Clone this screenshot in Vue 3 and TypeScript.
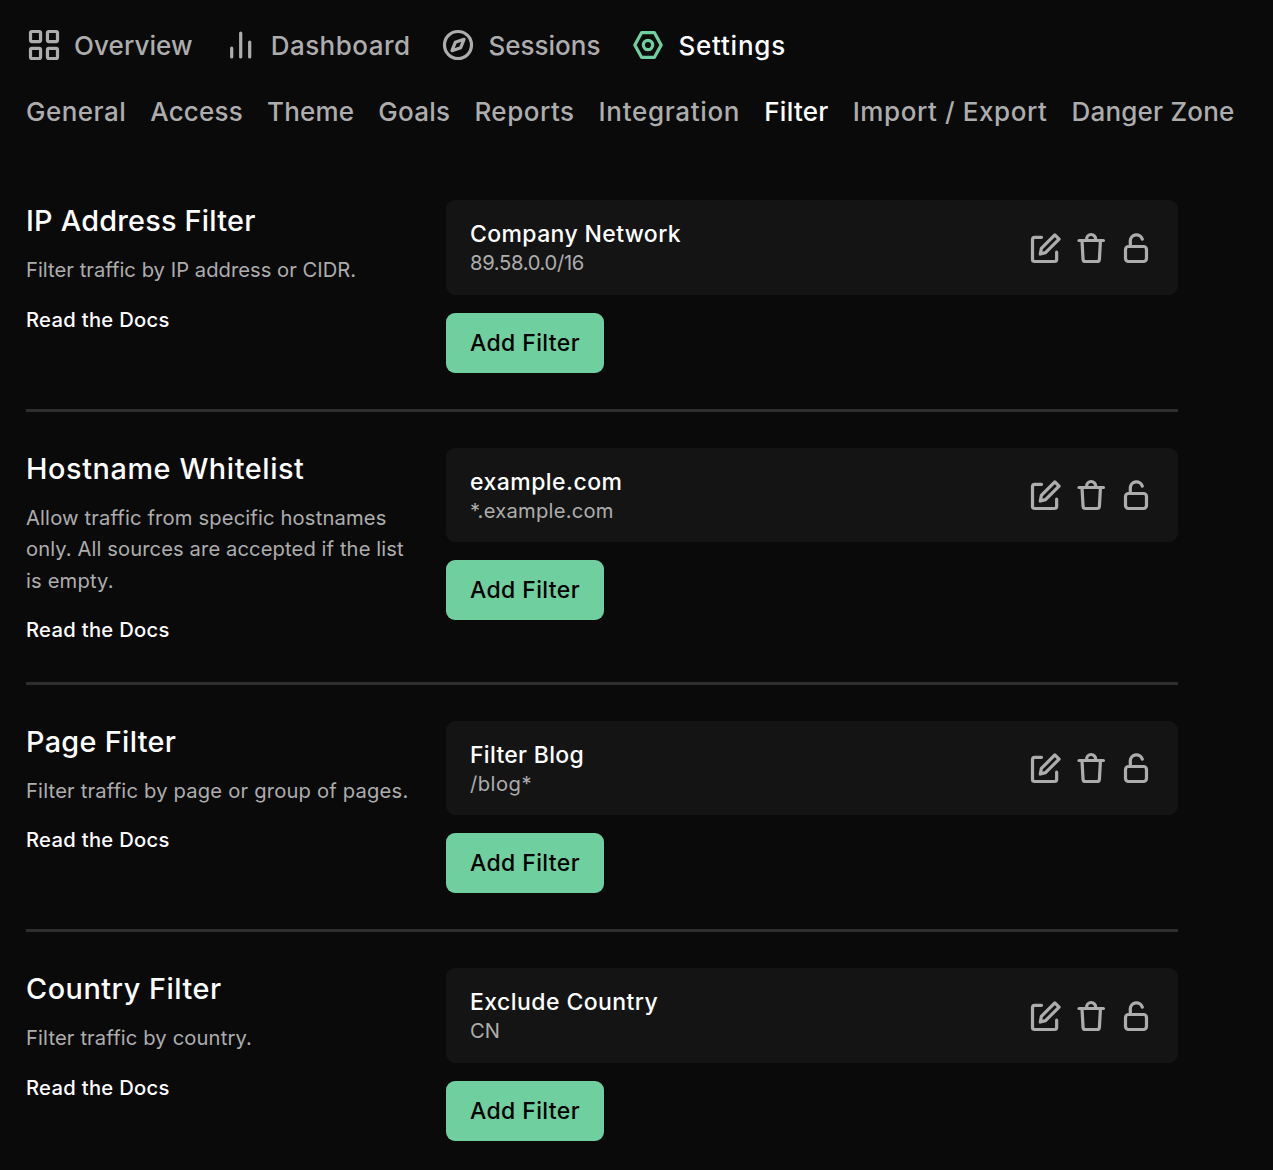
<script setup lang="ts">
import type { Directive } from 'vue'

interface Tab { label: string; icon: string; width: number; active?: boolean }
interface Label { label: string; width: number; active?: boolean }
interface Section {
  title: Label
  lines: Label[]
  name: Label
  value: Label
}

// Tracks a label so that its text takes up the given measure.
const vMeasure: Directive<HTMLElement, number> = {
  mounted(el, { value }) {
    const range = document.createRange()
    range.selectNodeContents(el)
    const natural = range.getBoundingClientRect().width
    const count = (el.textContent ?? '').trim().length
    el.style.letterSpacing = `${(value - natural) / count}px`
  },
}

const icons: Record<string, string> = {
  grid: 'M4 3h4.7a1 1 0 0 1 1 1v4.7a1 1 0 0 1-1 1H4a1 1 0 0 1-1-1V4a1 1 0 0 1 1-1zM15.3 3H20a1 1 0 0 1 1 1v4.7a1 1 0 0 1-1 1h-4.7a1 1 0 0 1-1-1V4a1 1 0 0 1 1-1zM4 14.3h4.7a1 1 0 0 1 1 1V20a1 1 0 0 1-1 1H4a1 1 0 0 1-1-1v-4.7a1 1 0 0 1 1-1zM15.3 14.3H20a1 1 0 0 1 1 1V20a1 1 0 0 1-1 1h-4.7a1 1 0 0 1-1-1v-4.7a1 1 0 0 1 1-1z',
  bars: 'M5.8 14v6M11.8 4v16M17.8 10v10',
  compass: 'M21 12a9 9 0 1 1-18 0a9 9 0 1 1 18 0zM16 8.2L10.2 10.2L8 15.8L13.8 13.8z',
  hexagon: 'M7.8 3.7h8.4L20.8 12l-4.6 8.3H7.8L3.2 12zM15.1 12a3.1 3.1 0 1 1-6.2 0a3.1 3.1 0 1 1 6.2 0z',
  edit: 'M9 4.9H4.5A1.5 1.5 0 0 0 3 6.4V19.5A1.5 1.5 0 0 0 4.5 21H17.6a1.5 1.5 0 0 0 1.5-1.5V14.8M8.2 16L8.9 12.3L17.9 3.3l2.8 2.8L11.7 15.1z',
  trash: 'M4 7h16.3M9.1 6.6V6a3 3 0 0 1 6 0v.6M6 7l.7 12.6A1.5 1.5 0 0 0 8.2 21h7.9a1.5 1.5 0 0 0 1.5-1.4L18.3 7',
  unlock: 'M7 11h10a2 2 0 0 1 2 2v6a2 2 0 0 1-2 2H7a2 2 0 0 1-2-2v-6a2 2 0 0 1 2-2zM8.2 11V7.1a4.1 4.1 0 0 1 8-1',
}

const actions = [
  { icon: 'edit', title: 'Edit' },
  { icon: 'trash', title: 'Delete' },
  { icon: 'unlock', title: 'Unlock' },
]

const tabs: Tab[] = [
  { label: 'Overview', icon: 'grid', width: 118.7 },
  { label: 'Dashboard', icon: 'bars', width: 139.8 },
  { label: 'Sessions', icon: 'compass', width: 112 },
  { label: 'Settings', icon: 'hexagon', width: 107.5, active: true },
]

const pages: Label[] = [
  { label: 'General', width: 100.2 },
  { label: 'Access', width: 92.8 },
  { label: 'Theme', width: 87.2 },
  { label: 'Goals', width: 72.2 },
  { label: 'Reports', width: 100.2 },
  { label: 'Integration', width: 141.6 },
  { label: 'Filter', width: 64.5, active: true },
  { label: 'Import / Export', width: 194.8 },
  { label: 'Danger Zone', width: 163 },
]

const sections: Section[] = [
  {
    title: { label: 'IP Address Filter', width: 229.5 },
    lines: [{ label: 'Filter traffic by IP address or CIDR.', width: 330.2 }],
    name: { label: 'Company Network', width: 211 },
    value: { label: '89.58.0.0/16', width: 114 },
  },
  {
    title: { label: 'Hostname Whitelist', width: 278.5 },
    lines: [
      { label: 'Allow traffic from specific hostnames', width: 360.5 },
      { label: 'only. All sources are accepted if the list', width: 377.7 },
      { label: 'is empty.', width: 87.7 },
    ],
    name: { label: 'example.com', width: 152.5 },
    value: { label: '*.example.com', width: 143.7 },
  },
  {
    title: { label: 'Page Filter', width: 150.2 },
    lines: [{ label: 'Filter traffic by page or group of pages.', width: 382.4 }],
    name: { label: 'Filter Blog', width: 114 },
    value: { label: '/blog*', width: 62 },
  },
  {
    title: { label: 'Country Filter', width: 195.7 },
    lines: [{ label: 'Filter traffic by country.', width: 226 }],
    name: { label: 'Exclude Country', width: 188.2 },
    value: { label: 'CN', width: 30 },
  },
]
</script>

<template>
  <div class="page">
    <nav class="tabs">
      <a v-for="tab in tabs" :key="tab.label" class="tab" :class="{ active: tab.active }">
        <svg class="icon" viewBox="0 0 24 24"><path :d="icons[tab.icon]" /></svg>
        <span v-measure="tab.width">{{ tab.label }}</span>
      </a>
    </nav>
    <nav class="pages">
      <a v-for="p in pages" :key="p.label" v-measure="p.width" :class="{ active: p.active }">{{ p.label }}</a>
    </nav>
    <main>
      <section v-for="s in sections" :key="s.title.label" class="section">
        <div class="about">
          <h2><span v-measure="s.title.width">{{ s.title.label }}</span></h2>
          <p>
            <span v-for="l in s.lines" :key="l.label" v-measure="l.width" class="line">{{ l.label }}</span>
          </p>
          <a class="docs"><span v-measure="143.7">Read the Docs</span></a>
        </div>
        <div class="filters">
          <div class="card">
            <div>
              <div class="name"><span v-measure="s.name.width">{{ s.name.label }}</span></div>
              <div class="value"><span v-measure="s.value.width">{{ s.value.label }}</span></div>
            </div>
            <div class="actions">
              <svg v-for="a in actions" :key="a.icon" class="icon" viewBox="0 0 24 24" :aria-label="a.title">
                <path :d="icons[a.icon]" />
              </svg>
            </div>
          </div>
          <button type="button"><span v-measure="110">Add Filter</span></button>
        </div>
      </section>
    </main>
  </div>
</template>

<style>
body {
  background: #0a0a0a;
}
</style>

<style scoped>
.page {
  box-sizing: border-box;
  height: 1170px;
  overflow: hidden;
  padding: 27px 26px 0;
  background: #0a0a0a;
  color: #adadad;
  font-family: Inter, "Open Sans", sans-serif;
  font-feature-settings: "calt" 0;
  white-space: nowrap;
}
.tabs {
  display: flex;
  gap: 30px;
  height: 36px;
  font-size: 26px;
  font-weight: 500;
  line-height: 38px;
}
.tab {
  display: flex;
  gap: 12px;
}
.icon {
  display: block;
  flex: none;
  width: 36px;
  height: 36px;
  fill: none;
  stroke: #adadad;
  stroke-width: 2.15;
  stroke-linecap: round;
  stroke-linejoin: round;
}
.active {
  color: #fff;
}
.active .icon {
  stroke: #70cf9f;
}
.pages {
  display: flex;
  gap: 24px;
  height: 36px;
  margin-top: 30px;
  font-size: 26px;
  font-weight: 500;
  line-height: 38px;
}
main {
  width: 1152px;
  padding-top: 71.25px;
}
.section {
  display: grid;
  grid-template-columns: 384px 732px;
  column-gap: 36px;
}
.section + .section {
  margin-top: 36px;
  padding-top: 36px;
  border-top: 3px solid #2e2e2e;
}
h2 {
  margin: 0 0 12px;
  color: #fff;
  font-size: 28.8px;
  font-weight: 500;
  line-height: 42px;
}
p {
  margin: 0 0 18px;
  font-size: 20.2px;
  line-height: 31.5px;
}
.line {
  display: block;
}
.docs {
  display: block;
  color: #fff;
  font-size: 20.2px;
  font-weight: 500;
  line-height: 31.5px;
}
.filters {
  display: flex;
  flex-direction: column;
  align-items: flex-start;
  gap: 18px;
}
.card {
  box-sizing: border-box;
  display: flex;
  align-items: center;
  justify-content: space-between;
  width: 100%;
  height: 94.5px;
  padding: 18px 24px;
  border-radius: 9px;
  background: #141414;
}
.name {
  height: 31.2px;
  color: #fff;
  font-size: 23px;
  font-weight: 500;
  line-height: 33.2px;
}
.value {
  font-size: 20.2px;
  line-height: 27.3px;
}
.actions {
  display: flex;
  gap: 9px;
}
button {
  height: 60px;
  padding: 0 24px;
  border: 0;
  border-radius: 9px;
  background: #70cf9f;
  color: #000;
  font: 500 23px/60px Inter, "Open Sans", sans-serif;
}
</style>
